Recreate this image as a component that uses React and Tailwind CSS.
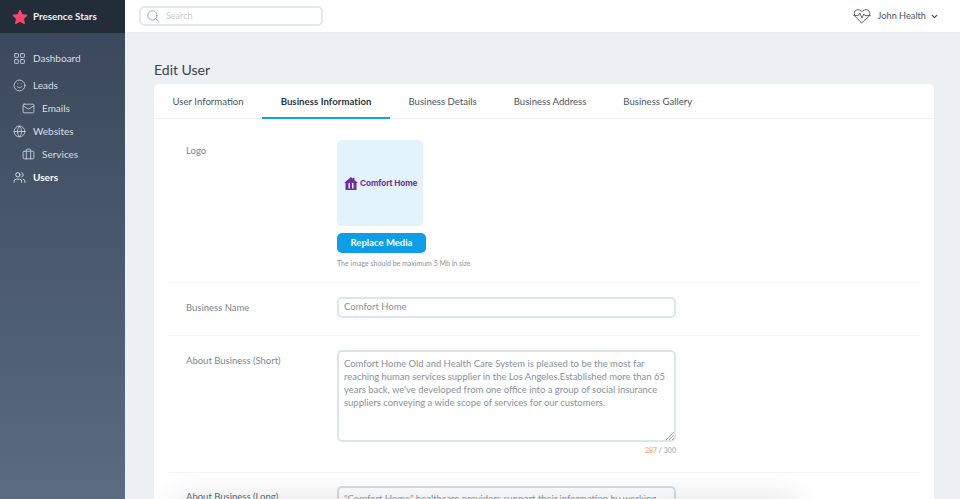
import React from "react";
import { LayoutGrid, Smile, Mail, Globe, Briefcase, Users, Search, ChevronDown } from "lucide-react";

function NavItem({ icon: Icon, label, sub, active, top }) {
  return (
    <div className={`flex items-center ${sub ? "pl-[22px]" : "pl-[13px]"} ${top} h-[23px]`}>
      <Icon strokeWidth={1.6} className={`w-[13px] h-[13px] ${active ? "text-[#e3e8ed]" : "text-[#ccd4dd]"} shrink-0`} />
      <span className={`text-[10px] ml-[7px] ${active ? "font-bold text-white" : "text-[#d8dee5]"}`}>{label}</span>
    </div>
  );
}

function Tab({ label, active }) {
  return (
    <div className={`h-[35px] px-[18.5px] pt-[2px] flex items-center border-b-2 text-[9.600px] leading-[14px] ${active ? "font-bold text-[#2a3542] border-[#0ea5e9] tracking-[0.05px]" : "text-[#4a5662] border-transparent"}`}>
      {label}
    </div>
  );
}

export default function App() {
  return (
    <div className="w-[960px] h-[499px] overflow-hidden flex bg-[#edf0f3] font-['Lato','Noto_Sans',sans-serif] relative">
      <aside className="w-[125px] shrink-0 flex flex-col bg-gradient-to-b from-[#39465a] to-[#5b6c80]">
        <div className="h-[33px] bg-[#232c39] flex items-center pl-[12px] gap-[5px] shrink-0">
          <svg width="16" height="16" viewBox="0 0 24 24" className="shrink-0">
            <path d="M12 1.500l3.300 6.900 7.500 1-5.500 5.200 1.400 7.500L12 18.400l-6.700 3.700 1.400-7.500L1.200 9.400l7.500-1z" fill="#f7476f" stroke="#f7476f" strokeWidth="1.500" strokeLinejoin="round" />
          </svg>
          <span className="text-[9.800px] font-bold text-[#eef1f4]">Presence Stars</span>
        </div>
        <nav className="flex flex-col pt-[14px]">
          <NavItem icon={LayoutGrid} label="Dashboard" top="" />
          <NavItem icon={Smile} label="Leads" top="mt-[4px]" />
          <NavItem icon={Mail} label="Emails" sub top="" />
          <NavItem icon={Globe} label="Websites" top="" />
          <NavItem icon={Briefcase} label="Services" sub top="" />
          <NavItem icon={Users} label="Users" active top="" />
        </nav>
      </aside>

      <div className="flex-1 flex flex-col min-w-0">
        <header className="h-[33px] shrink-0 bg-white flex items-center justify-between pl-[14px] pr-[21px] border-b border-[#e9ecef]">
          <div className="w-[184px] h-[20px] rounded-[5px] border-2 border-[#e4e9ee] flex items-center pl-[5px] gap-[6px]">
            <Search size={14} strokeWidth={1.3} className="text-[#8b949e]" />
            <span className="text-[9px] text-[#c6ccd3]">Search</span>
          </div>
          <div className="flex items-center">
            <svg width="18" height="16" viewBox="0 0 24 20" fill="none" stroke="#39424e" strokeWidth="1.100" strokeLinejoin="round" strokeLinecap="round">
              <path d="M3 10.500C1.200 8.600 1 5.400 2.800 3.300 4.800 1 8.600 1 11 3.300L12 4.300l1-1C15.400 1 19.200 1 21.200 3.300c1.800 2.100 1.600 5.300-.2 7.200L12 19z" />
              <path d="M1 9.500h6l2-3.500 3 6.500 2.500-5 1.500 2h7" />
            </svg>
            <span className="text-[9.200px] text-[#4a5460] ml-[7px]">John Health</span>
            <ChevronDown size={9} strokeWidth={3} className="text-[#3a4450] ml-[4px]" />
          </div>
        </header>

        <main className="pl-[29px] pr-[26px] flex-1 min-h-0">
          <h1 className="text-[14px] leading-[18px] text-[#39424e] mt-[28px] mb-[5px]">Edit User</h1>
          <div className="bg-white rounded-t-[5px] px-[14px] relative">
            <div className="flex -mx-[14px] border-b border-[#eef1f4] h-[35px]">
              <Tab label="User Information" />
              <Tab label="Business Information" active />
              <Tab label="Business Details" />
              <Tab label="Business Address" />
              <Tab label="Business Gallery" />
            </div>

            <div className="flex h-[164px] pt-[21px] border-b border-[#f2f4f6]">
              <div className="w-[169px] pl-[18px] pt-[1px] text-[9.500px] leading-[20px] text-[#7d8792] shrink-0">Logo</div>
              <div className="flex flex-col items-start">
                <div className="w-[86px] h-[86px] rounded-[5px] bg-[#e3f3fc] flex items-center pl-[7px] gap-[2px]">
                  <svg width="14" height="13" viewBox="0 0 14 13" fill="#6f2f9f" className="shrink-0">
                    <path d="M7 0l2 1.700V.8h1.500v2.200L14 6h-1.500v7h-11V6H0zM4.500 6v5.500H6V6zm3.500 0v5.500h1.500V6z" fillRule="evenodd" />
                  </svg>
                  <span className="text-[8.200px] font-bold text-[#6f2f9f] font-['Inter',sans-serif] tracking-[-0.1px] whitespace-nowrap">Comfort Home</span>
                </div>
                <button className="mt-[7px] w-[89px] h-[20px] rounded-[5px] bg-[#0f9de8] text-white text-[9.500px] font-bold">Replace Media</button>
                <p className="text-[7px] leading-[10px] text-[#8b95a0] mt-[5px]">The image should be maximum 5 Mb in size</p>
              </div>
            </div>

            <div className="flex h-[53px] pt-[14px] border-b border-[#f2f4f6]">
              <div className="w-[169px] pl-[18px] pt-[1px] text-[9.500px] leading-[20px] text-[#7d8792] shrink-0">Business Name</div>
              <div className="w-[339px] h-[21px] rounded-[5px] border-2 border-[#d9e6ee] pl-[5px] flex items-center text-[9.500px] text-[#88929d]">Comfort Home</div>
            </div>

            <div className="flex h-[137px] pt-[14px] border-b border-[#f2f4f6]">
              <div className="w-[169px] pl-[18px] pt-[1px] text-[9.500px] leading-[20px] text-[#7d8792] shrink-0">About Business (Short)</div>
              <div className="w-[339px] flex flex-col">
                <div className="h-[92px] rounded-[5px] border-2 border-[#dde5eb] pl-[5px] pr-[6px] pt-[5px] text-[9.450px] leading-[13px] text-[#88929d] relative">
                  Comfort Home Old and Health Care System is pleased to be the most far reaching human services supplier in the Los Angeles.Established more than 65 years back, we've developed from one office into a group of social insurance suppliers conveying a wide scope of services for our customers.
                  <svg width="8" height="8" viewBox="0 0 8 8" stroke="#707070" strokeWidth="0.700" className="absolute right-0 bottom-0">
                    <path d="M8 0L0 8M8 3L3 8M8 6L6 8" />
                  </svg>
                </div>
                <div className="text-[7px] font-bold text-right text-[#b5bcc4] mt-[3px] leading-[10px]"><span className="text-[#fbb46b]">287</span> / 300</div>
              </div>
            </div>

            <div className="flex pt-[14px]">
              <div className="w-[169px] pl-[18px] text-[9.500px] leading-[20px] text-[#5f6a76] shrink-0">About Business (Long)</div>
              <div className="w-[339px] h-[60px] -mt-[1px] rounded-[5px] border-2 border-[#d5dee5] pl-[5px] pt-[4px] text-[9.500px] leading-[13px] text-[#949da7]">
                "Comfort Home" healthcare providers support their information by working with
              </div>
            </div>
          </div>
        </main>
      </div>
      <div className="absolute left-[190px] w-[590px] top-[512px] h-[10px] shadow-[0_0_30px_16px_rgba(0,0,0,0.1)] pointer-events-none" />
    </div>
  );
}
